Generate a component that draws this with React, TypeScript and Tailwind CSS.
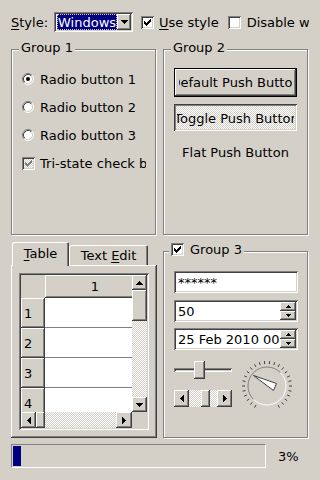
import React from "react";

// windows-style bevels
const raised =
  "shadow-[inset_-1px_-1px_#404040,inset_1px_1px_#fff,inset_-2px_-2px_#808080,inset_2px_2px_#d4d0c8]";
const sunken =
  "shadow-[inset_1px_1px_#808080,inset_-1px_-1px_#fff,inset_2px_2px_#404040,inset_-2px_-2px_#d4d0c8]";
const pressed =
  "shadow-[inset_1px_1px_#404040,inset_-1px_-1px_#fff,inset_2px_2px_#808080,inset_-2px_-2px_#d4d0c8]";
const tabEdge = "shadow-[inset_1px_1px_#fff,inset_-1px_0_#404040,inset_-2px_0_#808080]";
const dither =
  "bg-[image:repeating-conic-gradient(#fff_0_25%,#d4d0c8_0_50%)] bg-[length:2px_2px]";

function U({ children }: { children: React.ReactNode }) {
  return <span className="underline underline-offset-[2px]">{children}</span>;
}

type Dir = "up" | "down" | "left" | "right";

function Tri({ dir, s = 4 }: { dir: Dir; s?: number }) {
  const n = 2 * s - 1;
  let d = "";
  for (let i = 0; i < s; i++) {
    const len = 2 * (s - i) - 1;
    if (dir === "down") d += `M${i} ${i}h${len}v1h-${len}z`;
    if (dir === "up") d += `M${i} ${s - 1 - i}h${len}v1h-${len}z`;
    if (dir === "right") d += `M${i} ${i}h1v${len}h-1z`;
    if (dir === "left") d += `M${s - 1 - i} ${i}h1v${len}h-1z`;
  }
  const vert = dir === "up" || dir === "down";
  return (
    <svg width={vert ? n : s} height={vert ? s : n} className="shrink-0">
      <path d={d} fill="#000" />
    </svg>
  );
}

function ArrowBtn({ dir, className = "", s = 4 }: { dir: Dir; className?: string; s?: number }) {
  return (
    <div className={`shrink-0 bg-[#d4d0c8] ${raised} flex items-center justify-center ${className}`}>
      <Tri dir={dir} s={s} />
    </div>
  );
}

function CheckBox({ checked, tri }: { checked?: boolean; tri?: boolean }) {
  return (
    <div
      className={`w-[13px] h-[13px] shrink-0 ${sunken} ${tri ? dither : "bg-white"} flex items-center justify-center`}
    >
      {checked && (
        <svg width="7" height="7">
          <path
            d="M6 0h1v1h-1zM5 1h2v1h-2zM0 2h1v1h-1zM4 2h3v1h-3zM0 3h2v1h-2zM3 3h3v1h-3zM0 4h5v1h-5zM1 5h3v1h-3zM2 6h1v1h-1z"
            fill={tri ? "#808080" : "#000"}
          />
        </svg>
      )}
    </div>
  );
}

function Radio({ checked }: { checked?: boolean }) {
  return (
    <svg width="12" height="12" className="shrink-0">
      <circle cx="6" cy="6" r="4.5" fill="#fff" />
      <path d="M2.11 9.89A5.5 5.5 0 0 1 9.89 2.11" stroke="#808080" fill="none" />
      <path d="M9.89 2.11A5.5 5.5 0 0 1 2.11 9.89" stroke="#fff" fill="none" />
      <path d="M2.82 9.18A4.5 4.5 0 0 1 9.18 2.82" stroke="#404040" fill="none" />
      <path d="M9.18 2.82A4.5 4.5 0 0 1 2.82 9.18" stroke="#d4d0c8" fill="none" />
      {checked && <circle cx="6" cy="6" r="2" fill="#000" />}
    </svg>
  );
}

function GroupBox({
  title,
  left = "left-[8px]",
  children,
}: {
  title: React.ReactNode;
  left?: string;
  children: React.ReactNode;
}) {
  return (
    <div className="relative h-full pt-[9px] pr-[1px]">
      <div className="h-full border border-[#808080] shadow-[inset_1px_1px_#fff,1px_1px_#fff]">{children}</div>
      <div className={`absolute top-0 ${left} h-[15px] px-[2px] bg-[#d4d0c8] flex items-center`}>{title}</div>
    </div>
  );
}

function SpinBox({ text, className = "" }: { text: string; className?: string }) {
  return (
    <div className={`h-[22px] bg-white ${sunken} p-[2px] flex ${className}`}>
      <div className="flex-1 min-w-0 overflow-hidden whitespace-nowrap flex items-center pl-[2px]">{text}</div>
      <div className="w-[16px] flex flex-col">
        <ArrowBtn dir="up" s={3} className="h-[9px]" />
        <ArrowBtn dir="down" s={3} className="h-[9px]" />
      </div>
    </div>
  );
}

function Dial() {
  const ticks = [];
  const n = 26;
  for (let i = 0; i < n; i++) {
    const a = ((240 - (300 * i) / (n - 1)) * Math.PI) / 180;
    ticks.push(
      <line
        key={i}
        x1={28 + 22 * Math.cos(a)}
        y1={28 - 22 * Math.sin(a)}
        x2={28 + 25 * Math.cos(a)}
        y2={28 - 25 * Math.sin(a)}
        stroke="#404040"
      />
    );
  }
  return (
    <svg width="56" height="56" className="shrink-0 ml-[7px] mt-[8px]">
      <circle cx="28" cy="28" r="19" fill="#d4d0c8" />
      <path d="M14.56 41.44A19 19 0 0 1 41.44 14.56" stroke="#808080" fill="none" />
      <path d="M41.44 14.56A19 19 0 0 1 14.56 41.44" stroke="#fff" fill="none" />
      {ticks}
      <polygon points="14.5,17.5 37.5,25.5 34.5,32.5" fill="#fff" stroke="#404040" />
    </svg>
  );
}

function TablePane() {
  return (
    <div className={`h-full ${sunken} p-[2px] flex flex-col`}>
      <div className="flex flex-1 min-h-0">
        <div className="w-[111px] overflow-hidden bg-white">
          <div className="flex h-[23px] bg-[#d4d0c8]">
            <div className="w-[24px] shrink-0" />
            <div className={`w-[100px] shrink-0 ${raised} flex items-center justify-center`}>1</div>
          </div>
          {[1, 2, 3, 4, 5].map((n) => (
            <div key={n} className="flex h-[30px]">
              <div className={`w-[24px] shrink-0 bg-[#d4d0c8] ${raised} flex items-center pl-[3px]`}>{n}</div>
              <div className="w-[100px] shrink-0 bg-white border-b border-[#808080]" />
            </div>
          ))}
        </div>
        <div className="w-[15px] flex flex-col">
          <ArrowBtn dir="up" className="h-[15px]" />
          <div className={`h-[31px] shrink-0 bg-[#d4d0c8] ${raised}`} />
          <div className={`flex-1 ${dither}`} />
          <ArrowBtn dir="down" className="h-[15px]" />
        </div>
      </div>
      <div className="flex h-[16px]">
        <ArrowBtn dir="left" className="w-[15px]" />
        <div className={`w-[9px] bg-[#d4d0c8] ${raised}`} />
        <div className={`w-[71px] ${dither}`} />
        <ArrowBtn dir="right" className="w-[16px]" />
        <div className="flex-1 bg-[#d4d0c8]" />
      </div>
    </div>
  );
}

export default function App() {
  return (
    <div className="w-[320px] h-[480px] overflow-hidden bg-[#d4d0c8] text-[13px] leading-none text-black font-['DejaVu_Sans',sans-serif] flex flex-col">
      {/* style row */}
      <div className="flex items-center h-[20px] mt-[12px] ml-[11px] whitespace-nowrap">
        <span>
          <U>S</U>tyle:
        </span>
        <div className={`ml-[6px] w-[79px] h-[20px] shrink-0 bg-white ${sunken} p-[2px] flex`}>
          <div className="ml-[1px] w-[60px] bg-[#000080] text-white border border-dotted border-[#d4d0c8] overflow-hidden flex items-center">
            Windows
          </div>
          <ArrowBtn dir="down" className="w-[14px]" />
        </div>
        <div className="ml-[8px]">
          <CheckBox checked />
        </div>
        <span className="ml-[5px]">
          <U>U</U>se style
        </span>
        <div className="ml-[9px]">
          <CheckBox />
        </div>
        <span className="ml-[6px] w-[62px] overflow-hidden">
          <U>D</U>isable widgets
        </span>
      </div>

      <div className="grid grid-cols-[146px_146px] grid-rows-[195px_196px] gap-x-[6px] gap-y-[7px] ml-[11px] mt-[8px]">
        <GroupBox title="Group 1">
          <div className="pt-[15px] pl-[10px] mr-[9px] overflow-hidden whitespace-nowrap">
            {["Radio button 1", "Radio button 2", "Radio button 3"].map((t, i) => (
              <div key={t} className="flex items-center h-[28px]">
                <Radio checked={i === 0} />
                <span className="ml-[6px]">{t}</span>
              </div>
            ))}
            <div className="flex items-center h-[28px]">
              <CheckBox checked tri />
              <span className="ml-[5px]">Tri-state check box</span>
            </div>
          </div>
        </GroupBox>

        <GroupBox title="Group 2">
          <div className="pt-[18px] px-[10px] flex flex-col">
            <div className="h-[29px] border border-black">
              <div className={`h-full ${raised} px-[4px] flex`}>
                <div className="flex-1 min-w-0 flex items-center justify-center overflow-hidden whitespace-nowrap">
                  Default Push Button
                </div>
              </div>
            </div>
            <div className={`mt-[7px] h-[27px] ${pressed} ${dither} px-[3px] pt-[1px] flex`}>
              <div className="flex-1 min-w-0 flex items-center justify-center overflow-hidden whitespace-nowrap pl-[2px]">
                Toggle Push Button
              </div>
            </div>
            <div className="mt-[8px] h-[27px] flex items-center justify-center whitespace-nowrap">Flat Push Button</div>
          </div>
        </GroupBox>

        {/* tab widget */}
        <div className="flex flex-col h-full w-[146px]">
          <div className="flex items-end h-[23px] pl-[1px]">
            <div
              className={`relative z-10 w-[57px] h-[24px] mb-[-1px] bg-[#d4d0c8] rounded-t-[2px] ${tabEdge} flex items-center justify-center pb-[1px]`}
            >
              <span>
                <U>T</U>able
              </span>
            </div>
            <div className={`w-[79px] h-[20px] rounded-t-[2px] ${tabEdge} flex items-center justify-center`}>
              <span>
                Text <U>E</U>dit
              </span>
            </div>
          </div>
          <div className={`flex-1 min-h-0 ${raised} p-[8px]`}>
            <TablePane />
          </div>
        </div>

        <GroupBox
          left="left-[6px]"
          title={
            <span className="flex items-center">
              <CheckBox checked />
              <span className="ml-[6px]">Group 3</span>
            </span>
          }
        >
          <div className="pt-[19px] pl-[10px] flex flex-col w-[134px]">
            <div className={`h-[22px] bg-white ${sunken} flex items-center pl-[4px]`}>******</div>
            <SpinBox className="mt-[7px]" text="50" />
            <SpinBox className="mt-[6px]" text="25 Feb 2010 00:00" />
            <div className="flex">
              <div className="w-[58px] shrink-0 flex flex-col">
                <div className="relative h-[18px] mt-[11px] flex items-center">
                  <div className={`w-full h-[4px] ${sunken}`} />
                  <div className={`absolute left-[20px] top-0 w-[11px] h-[18px] bg-[#d4d0c8] ${raised}`} />
                </div>
                <div className="flex h-[17px] mt-[11px]">
                  <ArrowBtn dir="left" className="w-[15px]" />
                  <div className={`w-[12px] ${dither}`} />
                  <div className={`w-[9px] bg-[#d4d0c8] ${raised}`} />
                  <div className={`w-[7px] ${dither}`} />
                  <ArrowBtn dir="right" className="w-[15px]" />
                </div>
              </div>
              <Dial />
            </div>
          </div>
        </GroupBox>
      </div>

      {/* progress */}
      <div className="flex items-center ml-[11px] mt-[6px] h-[24px]">
        <div className="w-[255px] h-[24px] border border-t-[#808080] border-l-[#808080] border-r-white border-b-white p-[1px]">
          <div className="w-[8px] h-full bg-[#000080]" />
        </div>
        <span className="ml-[12px]">3%</span>
      </div>
    </div>
  );
}
